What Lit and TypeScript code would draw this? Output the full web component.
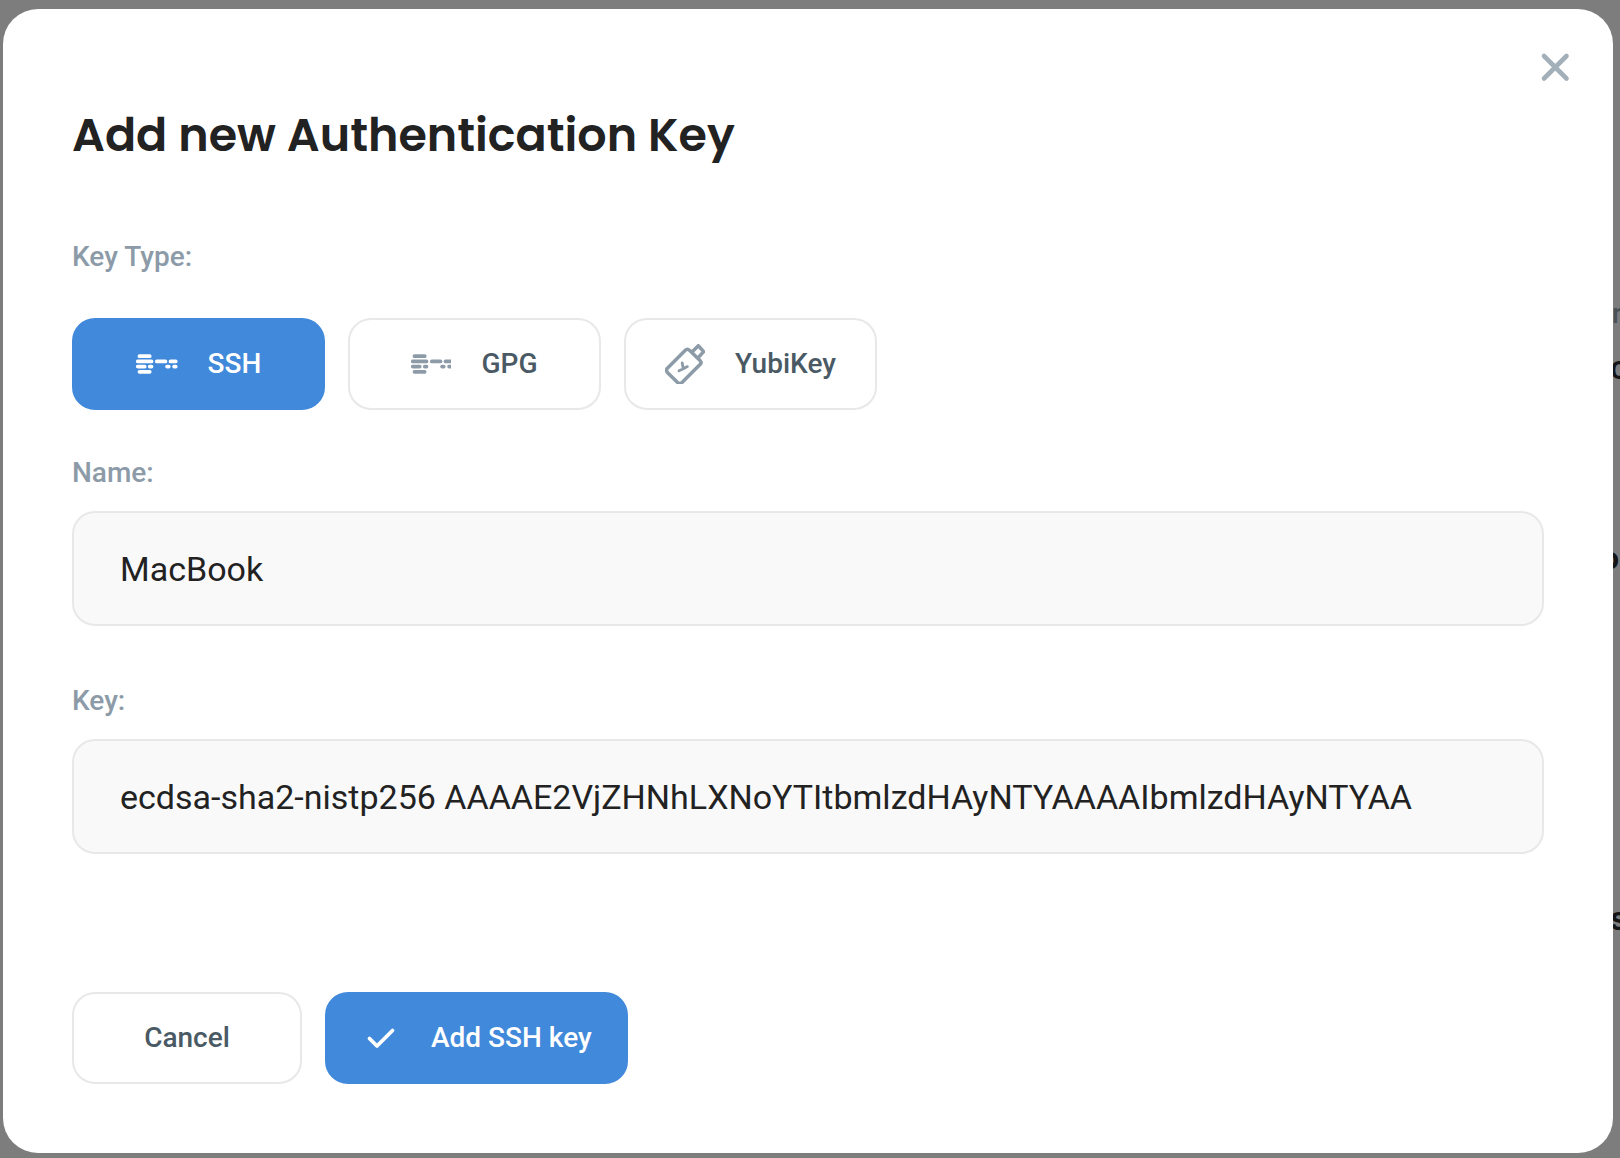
import { LitElement, html, css, svg } from "lit";
import { customElement, state } from "lit/decorators.js";

type KeyType = "SSH" | "GPG" | "YubiKey";

const dashesIcon = svg`
  <g fill="none" stroke="currentColor" stroke-width="3.8" stroke-linecap="round">
    <path d="M3.5 12.2H13.7M1.8 17.4H15.5M20.8 17.4H29.5M34.5 17.4H39.7M1.8 22.6H8.7M13.8 22.6H15.5M31.1 22.6H32.7M38.1 22.6H39.7M3.5 27.8H13.7" />
  </g>`;

const yubikeyIcon = svg`
  <g fill="none" stroke="currentColor" stroke-width="3.5" stroke-linecap="round" stroke-linejoin="round">
    <path d="M2.4 24.2 20.3 6.3Q22.4 4.2 24.5 6.3L35 16.4Q37.1 18.5 35 20.6L17 38.6Q14.8 40.6 12.6 38.6L2.4 28.4Q0.6 26.3 2.4 24.2Z" />
    <path d="M27.5 7.6 33.3 1.8 38.7 7.6 33.4 13.4" />
    <path stroke-width="2.8" d="M14 26.8 18.4 24.8 22.4 22.6M17.2 19 18.2 24.6" />
  </g>`;

const checkIcon = svg`
  <path d="M8.5 20.5 16 28 31.5 12.5" fill="none" stroke="currentColor" stroke-width="3.8" stroke-linecap="round" stroke-linejoin="round" />`;

@customElement("app-root")
export class AppRoot extends LitElement {
  static styles = css`
    :host {
      display: block;
      font-family: Roboto, "Liberation Sans", sans-serif;
      color: #222222;
    }
    * {
      box-sizing: border-box;
    }
    .page {
      position: relative;
      display: flex;
      min-height: 100vh;
      padding: 9px 7px 5px 3px;
      overflow: hidden;
      background: #7d7d7d;
    }
    .behind {
      position: absolute;
      top: 0;
      right: 0;
      width: 8px;
      height: 100%;
      font-size: 34px;
      line-height: 40px;
      font-weight: 500;
      color: #151515;
    }
    .behind span {
      position: absolute;
      left: -2px;
    }
    .behind .frag-r { top: 294px; left: 0; font-size: 28px; color: #4a5257; }
    .behind .frag-c { top: 347px; }
    .behind .frag-p { top: 538px; left: -11px; font-size: 32px; font-weight: 700; }
    .behind .frag-s { top: 898px; font-weight: 700; }
    .dialog {
      position: relative;
      flex: 1;
      display: flex;
      flex-direction: column;
      padding: 90px 69px 69px;
      border-radius: 35px;
      background: #ffffff;
    }
    .close {
      position: absolute;
      top: 38px;
      right: 38px;
      width: 40px;
      height: 40px;
      padding: 0;
      border: 0;
      background: none;
      color: #a3b0ba;
      cursor: pointer;
    }
    svg {
      display: block;
      flex: none;
      width: 40px;
      height: 40px;
    }
    .wide {
      width: 42px;
    }
    h1 {
      margin: 0;
      font: 600 46px/72px Poppins, Inter, sans-serif;
    }
    form {
      flex: 1;
      display: flex;
      flex-direction: column;
    }
    fieldset {
      min-width: 0;
      margin: 0;
      padding: 0;
      border: 0;
    }
    .caption {
      display: block;
      padding: 0;
      font-size: 28px;
      line-height: 40px;
      font-weight: 500;
      color: #8c9ba7;
    }
    .types {
      margin-top: 66px;
    }
    .row {
      display: flex;
      flex-wrap: wrap;
      gap: 23px;
    }
    .types .row {
      margin-top: 41px;
    }
    .button {
      display: flex;
      align-items: center;
      justify-content: center;
      gap: 30px;
      min-width: 230px;
      height: 92px;
      padding: 0 34px;
      border: 2px solid #e8e8e8;
      border-radius: 23px;
      background: #ffffff;
      color: #4a5a65;
      font: 500 28px/40px Roboto, "Liberation Sans", sans-serif;
      cursor: pointer;
    }
    .type {
      position: relative;
      min-width: 253px;
    }
    .type svg {
      color: #8c9ba7;
    }
    .type input {
      position: absolute;
      inset: 0;
      width: 100%;
      height: 100%;
      margin: 0;
      opacity: 0;
      cursor: pointer;
    }
    .primary,
    .primary svg {
      color: #ffffff;
    }
    .primary {
      border-color: #4189db;
      background: #4189db;
    }
    .field {
      margin-top: 43px;
    }
    .field + .field {
      margin-top: 55px;
    }
    .text {
      display: block;
      width: 100%;
      height: 115px;
      margin-top: 18px;
      padding: 0 120px 0 46px;
      border: 2px solid #e8e8e8;
      border-radius: 23px;
      outline: none;
      background: #f9f9f9;
      color: #222222;
      font: 400 34px/48px Roboto, "Liberation Sans", sans-serif;
    }
    .actions {
      margin-top: auto;
    }
  `;

  @state() private keyType: KeyType = "SSH";

  private renderType(type: KeyType) {
    const active = this.keyType === type;
    return html`
      <label class="button type ${active ? "primary" : ""}">
        <input
          type="radio"
          name="type"
          .checked=${active}
          @change=${() => (this.keyType = type)}
        />
        <svg
          class=${active ? "wide" : ""}
          viewBox=${active ? "0 0 42 40" : "0 0 40 40"}
          aria-hidden="true"
        >
          ${type === "YubiKey" ? yubikeyIcon : dashesIcon}
        </svg>
        <span>${type}</span>
      </label>
    `;
  }

  render() {
    return html`
      <div class="page">
        <div class="behind" aria-hidden="true">
          <span class="frag-r">r</span>
          <span class="frag-c">c</span>
          <span class="frag-p">o</span>
          <span class="frag-s">s</span>
        </div>
        <div class="dialog" role="dialog" aria-labelledby="title">
          <button class="close" type="button" aria-label="Close">
            <svg viewBox="0 0 40 40" aria-hidden="true">
              <path d="M9 9 31.5 31.5M31.5 9 9 31.5" fill="none" stroke="currentColor" stroke-width="4.6" stroke-linecap="round" />
            </svg>
          </button>
          <h1 id="title">Add new Authentication Key</h1>
          <form @submit=${(e: Event) => e.preventDefault()}>
            <fieldset class="types">
              <legend class="caption">Key Type:</legend>
              <div class="row">
                ${this.renderType("SSH")} ${this.renderType("GPG")}
                ${this.renderType("YubiKey")}
              </div>
            </fieldset>
            <div class="field">
              <label class="caption" for="name">Name:</label>
              <input class="text" id="name" type="text" value="MacBook" />
            </div>
            <div class="field">
              <label class="caption" for="key">Key:</label>
              <input
                class="text"
                id="key"
                type="text"
                value="ecdsa-sha2-nistp256 AAAAE2VjZHNhLXNoYTItbmlzdHAyNTYAAAAIbmlzdHAyNTYAA"
              />
            </div>
            <div class="row actions">
              <button class="button" type="button">Cancel</button>
              <button class="button primary" type="submit">
                <svg viewBox="0 0 40 40" aria-hidden="true">${checkIcon}</svg>
                <span>Add ${this.keyType} key</span>
              </button>
            </div>
          </form>
        </div>
      </div>
    `;
  }
}
